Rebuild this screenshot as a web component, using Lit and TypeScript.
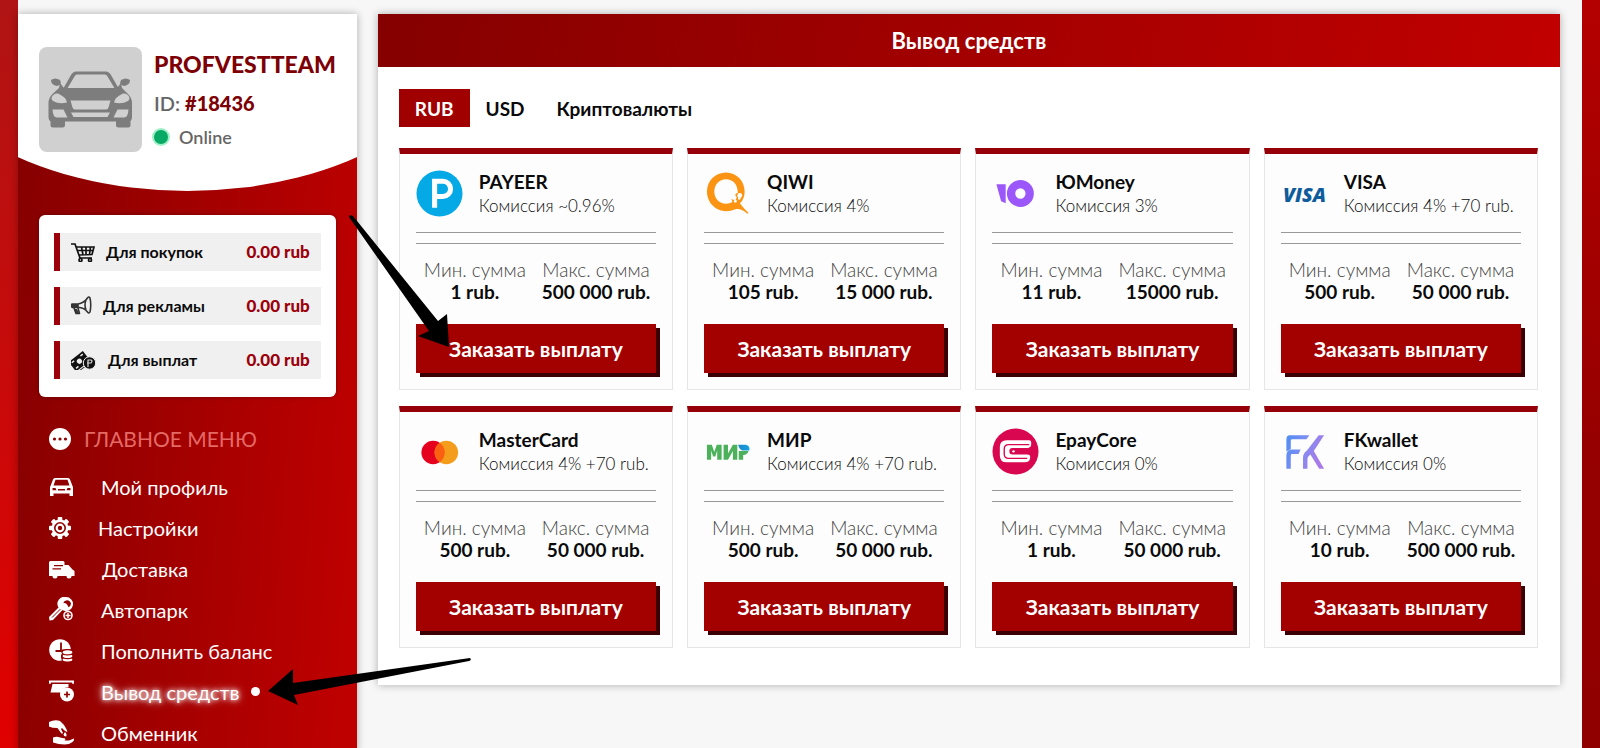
import { LitElement, html, css, svg } from "lit";
import { customElement, property } from "lit/decorators.js";
import { classMap } from "lit/directives/class-map.js";

const logos: Record<string, unknown> = {
  PAYEER: svg`<circle cx="24" cy="24" r="23.500" fill="#05a9e6"/>
    <path d="M19 38.500V11.500h8.500a7.800 7.800 0 0 1 0 15.600H19" fill="none" stroke="#fff" stroke-width="5.200"/>`,
  QIWI: svg`<path fill-rule="evenodd" fill="#fb9412" d="M22.500 2.500C33 2.500 41.500 11 41.500 22c0 4-1 7-2.800 9.800l-2 2.200c2 3 5.500 6.500 8.800 9.800l-1 .8c-4.500-3.500-8-5.500-12.500-4.600-3 1.300-6.200 2-9.500 2C11.500 42 3 33 3 22S11.500 2.500 22.500 2.500zM22.500 9.500c-6.800 0-12 5.500-12 12.500s5.200 12.500 12 12.500c2.600 0 4.500-.6 6.500-1.700l-1-3.200 4 1.500 1.500-3.500c-2.500-1-1.500-4.600 1-4.100.1-9-5.200-14-12-14z"/>
    <circle cx="32" cy="32" r="1.500" fill="#fff"/><circle cx="36" cy="29" r="1.300" fill="#fff"/><circle cx="36.500" cy="26" r="2.500" fill="#fff"/>`,
  ЮMoney: svg`<path d="M4.500 14.500h9.500V34L9.300 32z" fill="#9b57fa"/>
    <circle cx="29" cy="24" r="9.500" fill="none" stroke="#9b57fa" stroke-width="8.500"/>`,
  VISA: svg`<text x="24" y="33" text-anchor="middle" class="visa">VISA</text>`,
  MasterCard: svg`<circle cx="17.500" cy="25" r="12" fill="#e6001f"/><circle cx="31" cy="25" r="12" fill="#f49d1c"/>
    <path d="M24.200 15.100a12 12 0 0 1 0 19.800 12 12 0 0 1 0-19.800z" fill="#fb6012"/>`,
  МИР: svg`<defs><linearGradient id="mir"><stop offset="0" stop-color="#1b86c8"/><stop offset="1" stop-color="#12a3e0"/></linearGradient></defs>
    <path fill="#4cb15a" d="M3 17h5l2.500 7.500L13 17h5v15.500h-4.500V23l-2 6H9.300l-2-6v9.500H3zM20 17h4.500v9l5-9H34v15.500h-4.500v-9l-5 9H20zM35.500 23.500h10c-1 2.500-2.500 4-5.500 4v5h-4.500z"/>
    <path fill="url(#mir)" d="M35 17h6.500c4 0 5.500 2.500 4.700 6H41c-3.500 0-5.500-2.500-6-6z"/>`,
  EpayCore: svg`<circle cx="24" cy="24" r="23.500" fill="#d9074f"/>
    <path d="M15 12.500h23q2 0 2 2V17q0 2-2 3l-1 .500H21a3.300 3.300 0 0 0 0 6.600h15q3 0 3 2.500v.400q-.500 5-5.500 5H15q-7 0-7-7V19.500q0-7 7-7z" fill="#fff"/>
    <path d="M38 17H17q-4.500 0-4.500 4.500v5q0 4.500 4.500 4.500h19" fill="none" stroke="#d9074f" stroke-width="1.400"/>
    <circle cx="22" cy="23.800" r="1.200" fill="#fff"/>`,
  FKwallet: svg`<defs><linearGradient id="fk" x2="1" y2=".35"><stop offset="0" stop-color="#4f8df2"/><stop offset=".5" stop-color="#7f8df2"/><stop offset="1" stop-color="#a87be8"/></linearGradient></defs>
    <path fill="url(#fk)" d="M9 7.500h20l-3 4H11.500q-1.500 0-1.500 1.500v8.500L5.500 24V12Q5.500 7.500 9 7.500zM12 22h8l-2 4.500h-6.500q-1.500 0-1.500 1.500v13.500H5.500V28q0-6 6.500-6zM38.500 7.500H44L33.500 23.500 44 41.500h-5L30 27q-3 2-3 5v9.500h-4.500V30q0-4 4-7z"/>`,
};

const gearTeeth = [0, 45, 90, 135, 180, 225, 270, 315];

const icons: Record<string, unknown> = {
  avatar: svg`<g fill="#7d7d7d">
      <path d="M15 18 23 4q2-3.500 5-3.500h30q3 0 5 3.500l8 14h-4L59.500 5.500Q58.500 3.500 57 3.500H29q-1.500 0-2.500 2L19 18z"/>
      <path d="M11 17h63l6 6q4 4 4 9v14q0 4.500-4 4.500H4.500Q.5 50.500.5 46V32q0-5 4-9z"/>
      <path d="M2.500 49H17v5q0 2.500-2.500 2.500H5Q2.500 56.500 2.500 54zM68 49h14.500v5q0 2.500-2.500 2.500h-9.500Q68 56.500 68 54zM3 9q4-3 9 0l1 3q-2 4-6 2.500Q3 13 3 9zM82 9q-4-3-9 0l-1 3q2 4 6 2.500Q82 13 82 9zM12 12l4 5h-5zM73 12l-4 5h5z"/></g>
    <path fill="#d0d0d0" d="M3.500 27Q5 22 10 22.500q8 3.500 9 9-8 2-14-1.500-1.500-1-1.500-3zM81.500 27q-1.500-5-6.500-4.500-8 3.500-9 9 8 2 14-1.500 1.500-1 1.500-3zM22.500 29.500h40l-2 7q-.5 2-2.500 2H27q-2 0-2.500-2zM4.500 38.500h11l4 8H9q-4 0-4.500-8zM80.500 38.500h-11l-4 8H76q4 0 4.500-8zM23 41.500h39l-2.500 4.500h-34z"/>`,
  cart: svg`<g fill="none" stroke="#111" stroke-width="1.700"><path d="M0 2h4l5 14h12M5 5h18l-2 7.500-13 .5M6 8.500h16M10.500 5l1.500 8M15 5v8M19.500 5l-1 7.500"/><circle cx="9.500" cy="18" r="1.500"/><circle cx="19" cy="18" r="1.500"/></g>`,
  horn: svg`<g fill="none" stroke="#333" stroke-width="1.600" stroke-linejoin="round"><path d="M1 8h6q6-1 9.500-6 1.500-2 2.500 0 1.500 7 0 14-1 2-2.500 0-3-4-8-4.500H1.500Q0 9.500 1 8zM3 12l2 5.500h3.500L7 12M7 8v4M15 4q-2 5 0 10"/></g><path fill="#333" d="M0 8h7v3.500H0zM3 13h3l2 4.500H5z"/>`,
  cash: svg`<g transform="rotate(-38 10 10)"><path fill="#111" d="M-1 4h18v12H-1z"/><path d="M1 6.500h3M12 6.500h3M1 13.500h3M12 13.500h3" stroke="#eee" stroke-width="1.500"/><circle cx="8" cy="10" r="2.600" fill="#eee"/><path d="M-1 17.500h12" stroke="#333" stroke-width="1"/></g>
    <circle cx="18.500" cy="13" r="6.200" fill="#111" stroke="#f0f0f0"/><path d="M17 17v-7h3q2 .5 0 3h-4" fill="none" stroke="#ddd" stroke-width="1.200"/>`,
  dots: svg`<circle cx="11" cy="11" r="11" fill="#fff"/><g fill="#8c0000"><circle cx="5.500" cy="11" r="1.600"/><circle cx="11" cy="11" r="1.600"/><circle cx="16.500" cy="11" r="1.600"/></g>`,
  car: svg`<path fill-rule="evenodd" d="M6 2h13q1.500 0 2 1.500L23.500 10q.5.500.5 1.500V20h-3.500v-2.500h-16V20H1v-8.500q0-1 .5-1.500L4 3.500Q4.500 2 6 2zm.5 1.700L4.500 9.500h16l-2-5.800zM3.500 12v2.200h4L6.500 12zm18 0v2.200h-4l1-2.200zM9 13v1.500h7V13z"/>`,
  gear: svg`<g>${gearTeeth.map((a) => svg`<rect x="8.700" y="0" width="4.600" height="5" rx="1" transform="rotate(${a} 11 11)"/>`)}</g>
    <circle cx="11" cy="11" r="7.200" fill="none" stroke="#fff" stroke-width="2.400"/><circle cx="11" cy="11" r="3.300" fill="none" stroke="#fff" stroke-width="2.200"/>`,
  van: svg`<path fill-rule="evenodd" d="M1.500 3H14q1.500 0 1.500 1.500V7h4l4 4.500 2 1.500v5h-3a2.500 2.500 0 0 1-5 0H8.500a2.500 2.500 0 0 1-5 0H0V4.500Q0 3 1.500 3zM5 7v1.300h9V7zM3.500 10.200v1.300H12v-1.300z"/>`,
  key: svg`<path fill-rule="evenodd" d="M17 0a7 7 0 1 1-2 13.700L13.500 13 4 23l-3.500.5L0 20l9.500-9.500A7 7 0 0 1 17 0zm1 3.200q-3.500.5-3.500 3 3-.7 5 4 2.500-1.500 2.500-3.700-.8-3-4-3.300z"/><path d="M3 20.500l8.500-8.500" stroke="#a00000"/><circle cx="19" cy="18.500" r="4" fill="#980000" stroke="#fff" stroke-width="1.600"/><path d="M19 16v5M16.500 18.500h5" stroke="#fff" stroke-width="1.400"/>`,
  clock: svg`<circle cx="11" cy="12" r="10.800"/><path d="M12 4.500V13H6.500" fill="none" stroke="#900000" stroke-width="1.800"/><g fill="#fff" stroke="#980000" stroke-width="1.200"><path d="M13 20h11v4.500H13zM12 16.500h11v4H12zM13 11.500h11v4.500H13z" stroke="none" fill="#980000"/><ellipse cx="18.500" cy="21.500" rx="5.500" ry="2.600"/><ellipse cx="18.500" cy="18" rx="5.500" ry="2.600"/><ellipse cx="18.500" cy="14.300" rx="5.500" ry="2.600"/></g>`,
  payout: svg`<path d="M0 1.500h25v3.300h-1.800V3.500H1.800v1.300H0zM3.500 5h16v3q-6 .5-7 5.500H1.500z"/><circle cx="18" cy="15.500" r="7"/><path d="M18 12.500v6M15 15.500h6" stroke="#900000" stroke-width="1.700"/>`,
  exchange: svg`<path d="M0 2q6-3 11-1l4 4q2 3 3.500 6.500-1.500.5-3-1L13 8l-1 1 2 4q-1 1-2 0L8.500 8Q3 8 0 6.500zM16 12q2.500 2.500 1 4.500-2.500 0-2.500-2zM4 17.500q4-1.500 7 0l5 1q1 1-.5 2H20l5-2q1 1-1.500 3.500-3 2.500-8 2.500-6 0-11.500-2z"/>`,
};

interface Method { name: string; fee: string; min: string; max: string; }

const methods: Method[] = [
  { name: "PAYEER", fee: "~0.96%", min: "1", max: "500 000" },
  { name: "QIWI", fee: "4%", min: "105", max: "15 000" },
  { name: "ЮMoney", fee: "3%", min: "11", max: "15000" },
  { name: "VISA", fee: "4% +70 rub.", min: "500", max: "50 000" },
  { name: "MasterCard", fee: "4% +70 rub.", min: "500", max: "50 000" },
  { name: "МИР", fee: "4% +70 rub.", min: "500", max: "50 000" },
  { name: "EpayCore", fee: "0%", min: "1", max: "50 000" },
  { name: "FKwallet", fee: "0%", min: "10", max: "500 000" },
];

@customElement("payout-card")
class PayoutCard extends LitElement {
  @property({ attribute: false }) method!: Method;

  static styles = css`
    :host { display: flex; flex-direction: column; box-sizing: border-box; padding: 16px;
      background: #fdfdfd; border: 1px solid #e6e6e6; border-top: 6px solid #960009; }
    .head { display: flex; gap: 16px; white-space: nowrap; }
    .logo { width: 47px; height: 47px; flex: none; overflow: visible; }
    .visa { font: italic 800 20px "Open Sans", sans-serif; fill: #0f5c9d; }
    .name { margin: 0; font-size: 19px; line-height: 24px; font-weight: 700; }
    .fee { font-size: 17px; line-height: 23px; font-weight: 300; }
    .rule { height: 10px; margin: 15px 0; border: solid #999; border-width: 1px 0; }
    .limits { display: flex; gap: 16px; margin: 0 0 21px; padding-left: 8px; text-align: center;
      line-height: 22px; white-space: nowrap; }
    dt { font-size: 19px; font-weight: 300; color: #444; }
    dd { margin: 0; font-size: 19px; font-weight: 700; }
    .order { height: 49px; border: 0; padding: 0; background: #a30000; color: #fff; cursor: pointer;
      font: 700 21px Lato, sans-serif; box-shadow: 4px 4px 0 #3a0003; }
  `;

  render() {
    const m = this.method;
    return html`
      <div class="head">
        <svg class="logo" viewBox="0 0 48 48" aria-hidden="true">${logos[m.name]}</svg>
        <div><h3 class="name">${m.name}</h3><div class="fee">Комиссия ${m.fee}</div></div>
      </div>
      <div class="rule"></div>
      <dl class="limits">
        <div><dt>Мин. сумма</dt><dd>${m.min} rub.</dd></div>
        <div><dt>Макс. сумма</dt><dd>${m.max} rub.</dd></div>
      </dl>
      <button class="order">Заказать выплату</button>
    `;
  }
}

@customElement("side-panel")
class SidePanel extends LitElement {
  static styles = css`
    :host { display: block; background: linear-gradient(94deg, #850000, #be0000 96%); box-shadow: 0 0 8px rgba(0, 0, 0, .3); }
    .profile { display: flex; align-items: center; gap: 12px; box-sizing: border-box; height: 177px; padding: 33px 21px 39px;
      background: #fff; clip-path: ellipse(85% 100% at 50% 0); }
    .avatar { display: grid; place-items: center; flex: none; width: 103px; height: 105px; border-radius: 8px; background: #d0d0d0; }
    .who { display: grid; gap: 10px; font-size: 20px; line-height: 24px; font-weight: 600; color: #666; }
    .nick { margin: 0; padding-bottom: 3px; font-size: 23px; line-height: 28px; font-weight: 900; color: #7d0004; }
    .who b { color: #7d0004; }
    .online { display: flex; align-items: center; gap: 11px; font-size: 18px; }
    .lamp { width: 14px; height: 14px; border-radius: 50%; background: #07a964; box-shadow: 0 0 0 2px #9ff0c8; }
    .balances { display: grid; gap: 16px; margin: 24px 21px 27px; padding: 18px 15px; border-radius: 6px; background: #fff;
      list-style: none; box-shadow: 0 0 4px rgba(0, 0, 0, .3); }
    .balance { display: flex; align-items: center; gap: 11px; box-sizing: border-box; height: 38px; padding: 0 11px;
      border-left: 6px solid #9c000b; background: #f0f0f0; font-size: 16px; font-weight: 700; line-height: 22px; }
    .balance b { margin-left: auto; font-size: 17px; color: #9c000b; }
    .title { display: flex; align-items: center; gap: 13px; margin: 0 31px 12px; font-size: 21px; line-height: 30px;
      font-weight: 400; color: #e46a66; }
    .menu { margin: 0; padding: 0 31px; list-style: none; fill: #fff; }
    .link { display: flex; align-items: center; gap: 27px; height: 41px; color: #fff; font-size: 20px; text-decoration: none; }
    .current { text-shadow: 0 0 4px #fff, 0 0 9px #fff; }
    .current::after { content: ""; width: 9px; height: 9px; margin-left: -16px; border-radius: 50%; background: #fff; }
    svg { display: block; flex: none; }
  `;

  render() {
    const balances: [string, number, string][] = [["cart", 24, "Для покупок"], ["horn", 21, "Для рекламы"], ["cash", 26, "Для выплат"]];
    const menu: [string, number, string][] = [
      ["car", 25, "Мой профиль"], ["gear", 22, "Настройки"], ["van", 26, "Доставка"], ["key", 25, "Автопарк"],
      ["clock", 25, "Пополнить баланс"], ["payout", 25, "Вывод средств"], ["exchange", 25, "Обменник"],
    ];
    return html`
      <div class="profile">
        <div class="avatar"><svg width="85" height="58" viewBox="0 0 85 58" aria-hidden="true">${icons.avatar}</svg></div>
        <div class="who">
          <h1 class="nick">PROFVESTTEAM</h1>
          <div>ID: <b>#18436</b></div>
          <div class="online"><span class="lamp"></span>Online</div>
        </div>
      </div>
      <ul class="balances">
        ${balances.map(([icon, w, label]) => html`<li class="balance">
          <svg width=${w} height="20" viewBox="0 0 ${w} 20" aria-hidden="true">${icons[icon]}</svg>${label}<b>0.00 rub</b></li>`)}
      </ul>
      <h2 class="title"><svg width="22" height="22" aria-hidden="true">${icons.dots}</svg>ГЛАВНОЕ МЕНЮ</h2>
      <ul class="menu">
        ${menu.map(([icon, w, label]) => {
          const h = icon === "car" || icon === "gear" || icon === "van" ? 22 : 25;
          return html`<li><a href="#" class=${classMap({ link: true, current: icon === "payout" })}>
            <svg width=${w} height=${h} viewBox="0 0 ${w} ${h}" aria-hidden="true">${icons[icon]}</svg>${label}</a></li>`;
        })}
      </ul>
    `;
  }
}

@customElement("app-root")
class AppRoot extends LitElement {
  static styles = css`
    :host { display: flex; position: relative; box-sizing: border-box; height: 100vh; overflow: hidden; padding: 0 18px;
      font-family: Lato, "Open Sans", sans-serif; color: #0a0a0a;
      background: linear-gradient(#b01414, #e00000) left / 50% 100% no-repeat, linear-gradient(#b40000, #960000 60%, #900000) right / 50% 100% no-repeat; }
    .page { display: flex; flex: 1; align-items: flex-start; gap: 21px; padding: 14px 22px 0 0; background: #f7f7f7; }
    side-panel { flex: 0 0 338px; min-height: 100%; }
    .payouts { flex: 1; background: #fff; box-shadow: 0 0 8px rgba(0, 0, 0, .3); }
    .heading { margin: 0; background: linear-gradient(100deg, #850000, #c10000); color: #fff; text-align: center;
      font-size: 22px; line-height: 53px; font-weight: 700; }
    .tabs { display: flex; padding: 22px 21px 21px; }
    .tab { height: 38px; border: 0; padding: 0 16px; background: none; color: inherit; font: 700 19px Lato, sans-serif; cursor: pointer; }
    .active { background: #a00000; color: #fff; }
    .grid { display: grid; grid-template-columns: repeat(4, 1fr); gap: 16px 14px; padding: 0 22px 37px 21px; }
    .pointers { position: absolute; left: 0; top: 0; pointer-events: none; }
  `;

  render() {
    return html`
      <div class="page">
        <side-panel></side-panel>
        <main class="payouts">
          <h2 class="heading">Вывод средств</h2>
          <nav class="tabs">
            ${["RUB", "USD", "Криптовалюты"].map((t) => html`<button class=${classMap({ tab: true, active: t === "RUB" })}>${t}</button>`)}
          </nav>
          <div class="grid">${methods.map((m) => html`<payout-card .method=${m}></payout-card>`)}</div>
        </main>
      </div>
      <svg class="pointers" width="480" height="720" aria-hidden="true">
        <path d="M349 217q0-3 4-1L438 321l9-7 2 33-31-11 11-5z"/>
        <path d="M470 658q2 2-1 3L294 695l4 10-30-14 25-22v14z"/>
      </svg>
    `;
  }
}
